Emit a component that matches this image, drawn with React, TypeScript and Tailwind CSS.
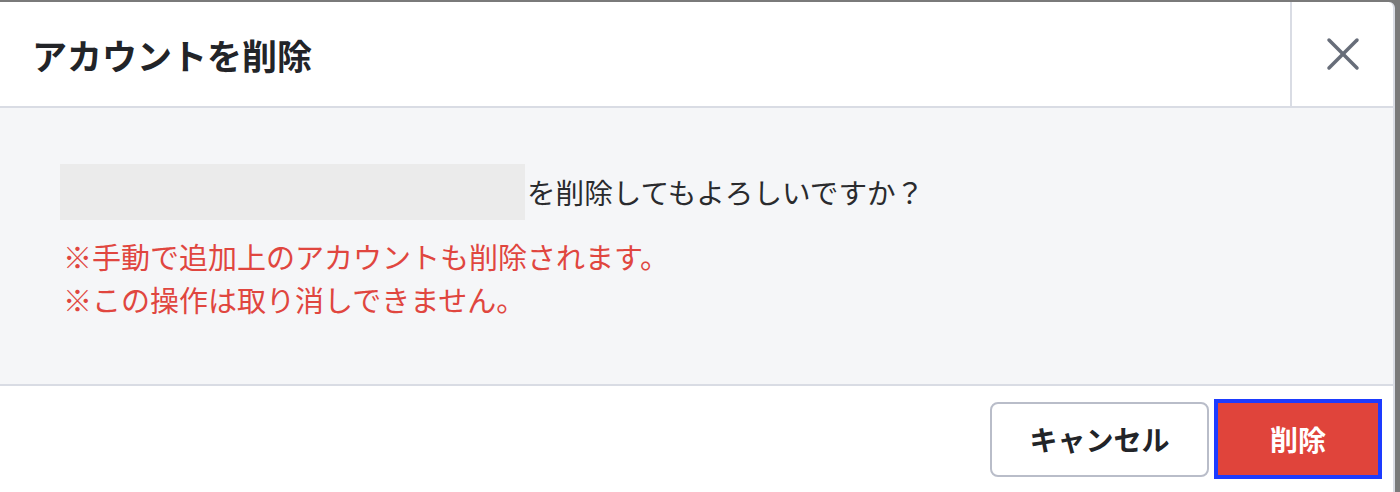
import { X } from "lucide-react"

// ── 削除確認ダイアログ ─────────────────────────────────────────
const FONT = "font-['Noto_Sans_CJK_JP','Noto_Sans',sans-serif]"

function DialogHeader({ title }: { title: string }) {
  return (
    <div className="flex h-[106px] shrink-0 items-stretch border-b-2 border-[#d9dce4]">
      <h2 className="flex flex-1 items-center pl-[32px] text-[35px] font-bold leading-none text-[#222428]">
        {title}
      </h2>
      <button className="flex w-[103px] items-center justify-center border-l-2 border-[#d9dce4] text-[#676d79]">
        <X size={56} strokeWidth={1.5} />
      </button>
    </div>
  )
}

function DialogBody() {
  return (
    <div className="h-[276px] shrink-0 bg-[#f5f6f8] pl-[60px] pt-[56px]">
      <div className="flex items-center">
        {/* 伏せ字（アカウント名） */}
        <div className="h-[56px] w-[465px] bg-[#ebebeb]" />
        <span className="ml-[2px] text-[28.6px] leading-none text-[#2a2b2e]">
          を削除してもよろしいですか？
        </span>
      </div>
      <div className="mt-[15px] pl-[3px] text-[29px] leading-[43px] text-[#e0463f]">
        <p>※手動で追加上のアカウントも削除されます。</p>
        <p>※この操作は取り消しできません。</p>
      </div>
    </div>
  )
}

function DialogFooter() {
  return (
    <div className="flex h-[108px] shrink-0 items-center justify-end gap-[5px] border-t-2 border-[#d9dce4] pr-[11px]">
      <button className="h-[75px] w-[219px] rounded-lg border-2 border-[#b9bdc9] bg-white text-[28px] font-bold text-[#222428]">
        キャンセル
      </button>
      <button className="h-[80px] w-[168px] border-4 border-[#1d3bff] bg-[#e0443b] text-[28px] font-bold text-white">
        削除
      </button>
    </div>
  )
}

export default function App() {
  return (
    <div className={`h-[492px] w-[1400px] overflow-hidden bg-[#7a7a7a] pt-[2px] pr-[5px] ${FONT}`}>
      <div className="flex h-[490px] flex-col overflow-hidden rounded-tr-md border-r-2 border-[#d9dce4] bg-white">
        <DialogHeader title="アカウントを削除" />
        <DialogBody />
        <DialogFooter />
      </div>
    </div>
  )
}
